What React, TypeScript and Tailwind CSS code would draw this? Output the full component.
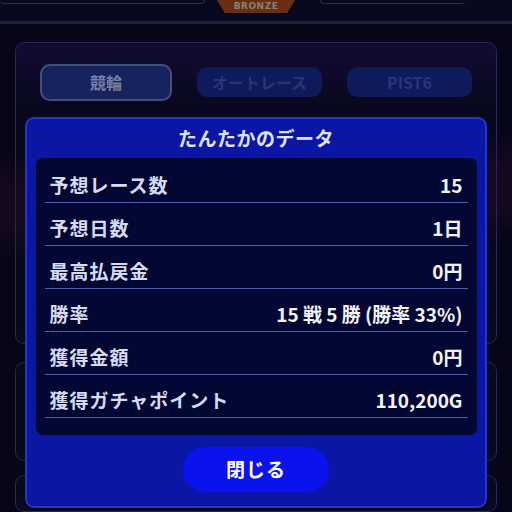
import React from "react";

const rows = [
	{ label: "予想レース数", value: "15" },
	{ label: "予想日数", value: "1日" },
	{ label: "最高払戻金", value: "0円" },
	{ label: "勝率", value: "15 戦 5 勝 (勝率 33%)" },
	{ label: "獲得金額", value: "0円" },
	{ label: "獲得ガチャポイント", value: "110,200G" },
];

function Tab({ label, active }: { label: string; active?: boolean }) {
	return (
		<div
			className={`flex items-center justify-center rounded-[10px] font-bold ${
				active
					? "w-[132px] h-[37px] border-2 border-[#4a4f78] bg-[#17235f] text-[#7880a6] text-[16px]"
					: "w-[125px] h-[30px] bg-[#0f1a5a] text-[#27357e] text-[16px]"
			}`}
		>
			{label}
		</div>
	);
}

function App() {
	return (
		<div
			className="relative w-[512px] h-[512px] overflow-hidden bg-[#060618] flex flex-col"
			style={{ fontFamily: '"Noto Sans CJK JP", "Noto Sans", sans-serif' }}
		>
			{/* faint glow streaks on the sides */}
			<div className="absolute -left-[30px] top-[170px] w-[70px] h-[70px] rotate-[25deg] bg-[#3a1030] opacity-30 blur-[12px]" />
			<div className="absolute -right-[30px] top-[150px] w-[70px] h-[70px] -rotate-[25deg] bg-[#3a1030] opacity-30 blur-[12px]" />

			{/* header strip */}
			<div className="relative h-[25px] bg-[#08081e] border-b-[3px] border-[#1c2046] flex items-start">
				<div className="ml-0 w-[205px] h-[4px] rounded-b-[6px] border-b border-r border-[#2a2e58]" />
				<div className="ml-[12px] w-[78px] h-[13px] bg-[#6a2e10] [clip-path:polygon(0_0,100%_0,90%_100%,10%_100%)] flex items-center justify-center">
					<span className="text-[9px] leading-none font-bold text-[#8a8078] tracking-[0.5px]" style={{ fontFamily: '"DejaVu Sans", sans-serif' }}>
						BRONZE
					</span>
				</div>
				<div className="ml-[25px] w-[145px] h-[4px] rounded-b-[6px] border-b border-l border-[#2a2e58]" />
			</div>

			{/* background card with tabs */}
			<div className="mx-[15px] mt-[18px] h-[324px] rounded-[9px] border-[1.5px] border-[#262a58] bg-gradient-to-b from-[#140a34] to-[#08081f] to-[20%]">
				<div className="flex items-center justify-between px-[24px] pt-[21px]">
					<Tab label="競輪" active />
					<Tab label="オートレース" />
					<Tab label="PIST6" />
				</div>
			</div>
			<div className="mx-[15px] mt-[18px] h-[105px] rounded-[9px] border-[1.5px] border-[#262a58] bg-[#08081f]" />
			<div className="mx-[15px] mt-[14px] h-[40px] rounded-[9px] border-[1.5px] border-[#262a58] bg-[#08081f]" />

			{/* modal */}
			<div className="absolute left-[25px] top-[117px] w-[462px] h-[391px] rounded-[9px] border-2 border-[#2436c6] bg-[#0b17a4] flex flex-col items-center">
				<div className="h-[39px] flex items-center justify-center text-[19px] font-bold text-[#dfe2f6] tracking-[0.5px]">
					たんたかのデータ
				</div>
				<div className="w-[441px] rounded-[7px] bg-[#030733] px-[9px] pt-[2px] pb-[17px]">
					{rows.map((row) => (
						<div
							key={row.label}
							className="h-[43px] flex items-center justify-between px-[5px] pt-[8px] border-b-[1.5px] border-[#4f5cab]"
						>
							<span className="text-[19px] font-bold text-[#d6dbf3] tracking-[1px]">{row.label}</span>
							<span className="text-[19px] font-bold text-[#f3f4fc]">{row.value}</span>
						</div>
					))}
				</div>
				<button className="mt-[12px] w-[146px] h-[45px] rounded-full bg-[#0a12ee] text-[19px] font-bold text-white tracking-[1px]">
					閉じる
				</button>
			</div>
		</div>
	);
}

export default App;
